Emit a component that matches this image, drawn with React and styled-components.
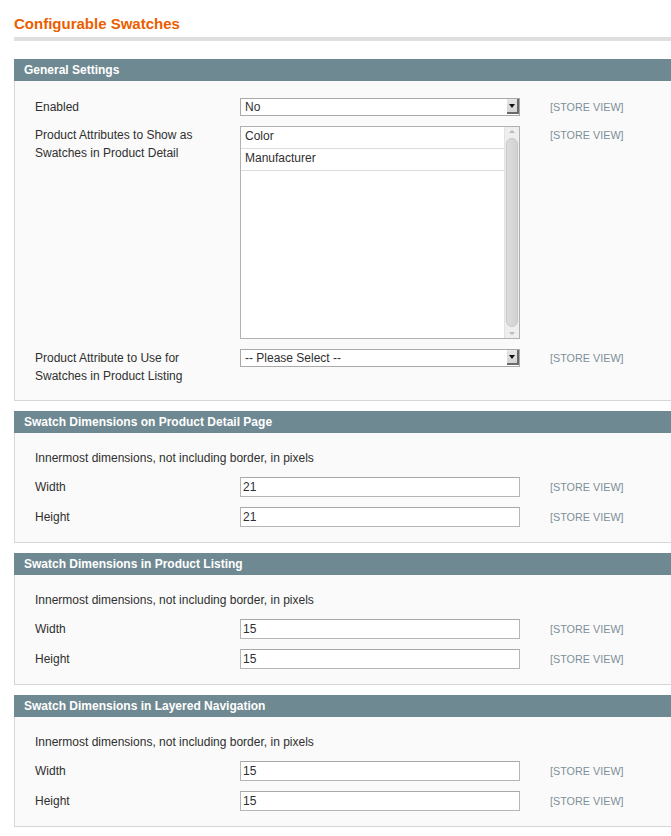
import React from 'react';
import styled, { createGlobalStyle } from 'styled-components';

const Global = createGlobalStyle`
  html, body { margin: 0; padding: 0; background: #fff; overflow-x: hidden; }
  body { font-family: "Liberation Sans", Arial, sans-serif; font-size: 12px; color: #2f2f2f; }
`;

const Page = styled.div`
  padding: 15px 0 0 14px;
  width: 680px;
`;

const Title = styled.h3`
  margin: 0;
  font-size: 15px;
  line-height: 18px;
  font-weight: bold;
  color: #eb5e00;
  padding-bottom: 4px;
  border-bottom: 4px solid #dfdfdf;
  margin-bottom: 18px;
`;

const Section = styled.div`
  margin-bottom: 10px;
`;

const SectionHead = styled.div`
  height: 22px;
  background: #6f8992;
  color: #fff;
  font-weight: bold;
  font-size: 12px;
  line-height: 22px;
  padding-left: 10px;
`;

const SectionBody = styled.div`
  background: #fafafa;
  border: 1px solid #d6d6d6;
  border-top: 0;
  padding: 17px 0 15px 20px;
  display: flex;
  flex-direction: column;
  gap: 10px;
`;

const Note = styled.div`
  line-height: 16px;
  margin-bottom: 1px;
`;

const Row = styled.div`
  display: grid;
  grid-template-columns: 205px 280px 30px auto;
  align-items: start;
  min-height: ${p => p.$h || 18}px;
`;

const Label = styled.div`
  line-height: 18px;
  padding-top: ${p => p.$top || 0}px;
  padding-right: 20px;
`;

const Scope = styled.div`
  grid-column: 4;
  font-size: 10.8px;
  color: #7d9099;
  line-height: 18px;
  padding-top: ${p => p.$top || 0}px;
`;

const Input = styled.div`
  box-sizing: border-box;
  height: 20px;
  border: 1px solid #b6b6b6;
  border-top-color: #a8a8a8;
  background: #fff;
  padding-left: 2px;
  line-height: 18px;
  font-size: 12px;
`;

const Select = styled.div`
  box-sizing: border-box;
  position: relative;
  height: 18px;
  border: 1px solid #a9a9a9;
  background: #fff;
  padding-left: 4px;
  line-height: 16px;
`;

const SelectBtn = styled.span`
  position: absolute;
  right: 0;
  top: 0;
  width: 12px;
  height: 15px;
  box-sizing: border-box;
  background: linear-gradient(#e6e6e6, #d4d4d4);
  border-right: 2px solid #6a6a6a;
  border-bottom: 2px solid #6a6a6a;
  display: flex;
  align-items: center;
  justify-content: center;
  &::after {
    content: "";
    border-left: 3px solid transparent;
    border-right: 3px solid transparent;
    border-top: 4px solid #111;
  }
`;

const Multi = styled.div`
  box-sizing: border-box;
  position: relative;
  height: 213px;
  border: 1px solid #b1b1b1;
  background: #fff;
  padding-right: 14px;
`;

const Option = styled.div`
  height: 21px;
  line-height: 19px;
  padding-left: 4px;
  border-bottom: 1px solid #dcdcdc;
`;

const Track = styled.div`
  position: absolute;
  right: 0;
  top: 0;
  bottom: 0;
  width: 14px;
  background: #eee;
  border-left: 1px solid #e2e2e2;
  display: flex;
  flex-direction: column;
  align-items: center;
`;

const Arrow = styled.div`
  height: 9px;
  display: flex;
  align-items: center;
  justify-content: center;
  &::after {
    content: "";
    border-left: 3px solid transparent;
    border-right: 3px solid transparent;
    ${p => p.$down ? 'border-top: 3px solid #b8b8b8;' : 'border-bottom: 3px solid #b8b8b8;'}
  }
`;

const Thumb = styled.div`
  flex: 1;
  width: 12px;
  margin: 2px 0;
  border-radius: 6px;
  background: linear-gradient(90deg, #dcdcdc, #d2d2d2);
  border: 1px solid #c8c8c8;
  box-sizing: border-box;
`;

const SelectField = ({ value }) => (
  <Select>{value}<SelectBtn /></Select>
);

const DimSection = ({ title, w, h }) => (
  <Section>
    <SectionHead>{title}</SectionHead>
    <SectionBody>
      <Note>Innermost dimensions, not including border, in pixels</Note>
      <Row $h={20}>
        <Label $top={1}>Width</Label>
        <Input>{w}</Input>
        <Scope $top={1}>[STORE VIEW]</Scope>
      </Row>
      <Row $h={20}>
        <Label $top={1}>Height</Label>
        <Input>{h}</Input>
        <Scope $top={1}>[STORE VIEW]</Scope>
      </Row>
    </SectionBody>
  </Section>
);

const App = () => (
  <Page>
    <Global />
    <Title>Configurable Swatches</Title>

    <Section>
      <SectionHead>General Settings</SectionHead>
      <SectionBody>
        <Row>
          <Label>Enabled</Label>
          <SelectField value="No" />
          <Scope>[STORE VIEW]</Scope>
        </Row>
        <Row>
          <Label>Product Attributes to Show as Swatches in Product Detail</Label>
          <Multi>
            <Option>Color</Option>
            <Option>Manufacturer</Option>
            <Track>
              <Arrow />
              <Thumb />
              <Arrow $down />
            </Track>
          </Multi>
          <Scope>[STORE VIEW]</Scope>
        </Row>
        <Row>
          <Label>Product Attribute to Use for Swatches in Product Listing</Label>
          <SelectField value="-- Please Select --" />
          <Scope>[STORE VIEW]</Scope>
        </Row>
      </SectionBody>
    </Section>

    <DimSection title="Swatch Dimensions on Product Detail Page" w="21" h="21" />
    <DimSection title="Swatch Dimensions in Product Listing" w="15" h="15" />
    <DimSection title="Swatch Dimensions in Layered Navigation" w="15" h="15" />
  </Page>
);

export default App;
